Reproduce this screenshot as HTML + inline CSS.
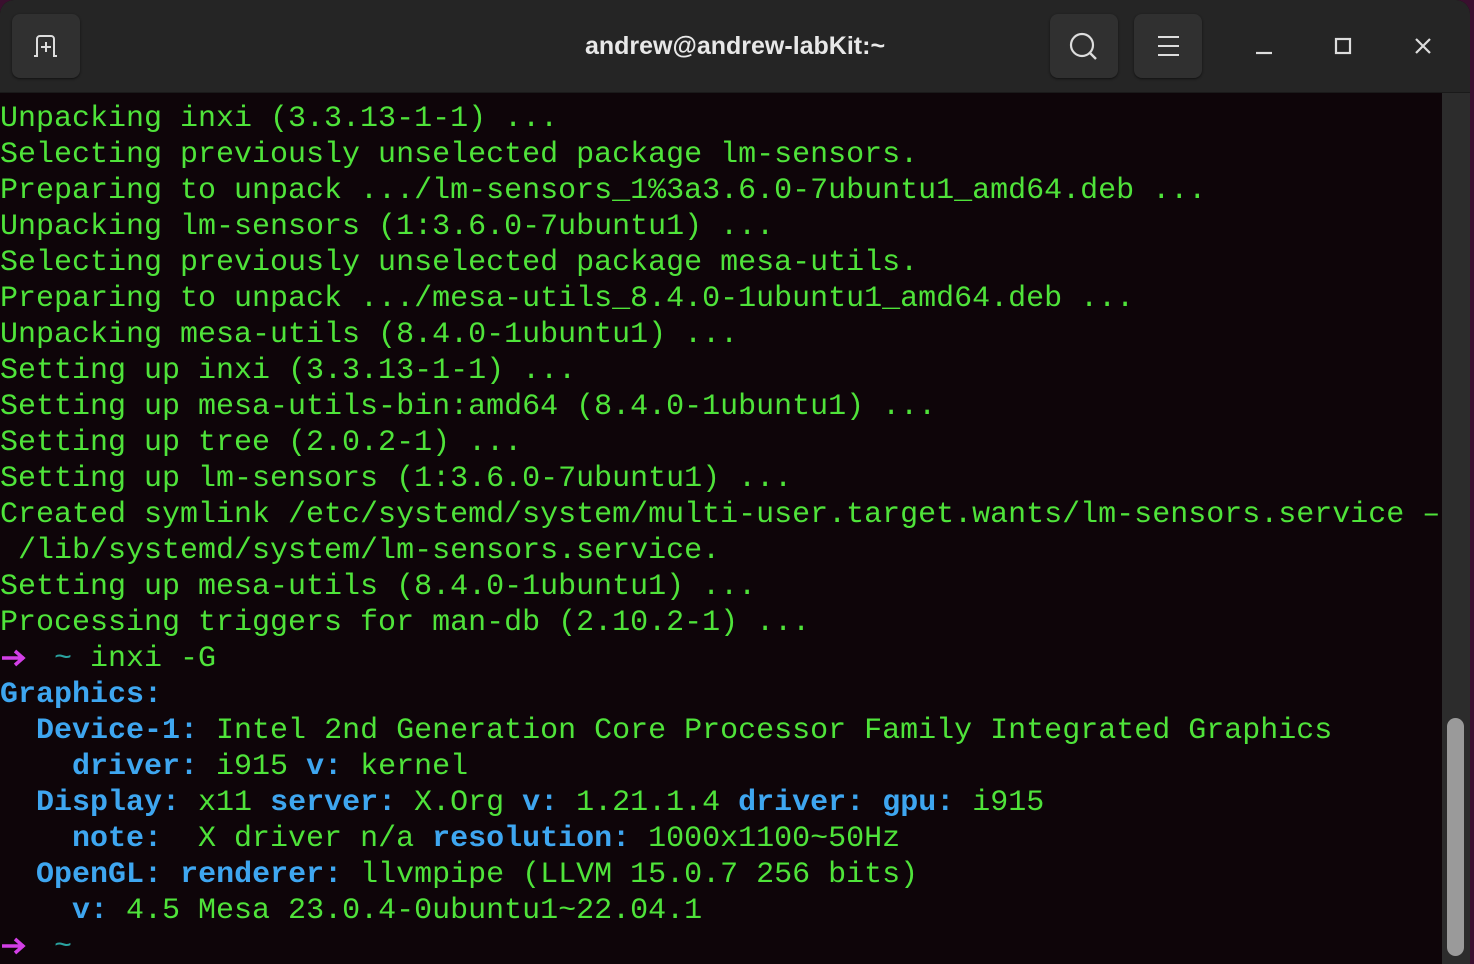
<!DOCTYPE html>
<html><head><meta charset="utf-8"><style>
html,body{margin:0;padding:0;width:1474px;height:964px;overflow:hidden;background:#3a0f2e}
#win{position:absolute;left:0;top:0;width:1470px;height:964px;background:#0e0509;border-radius:14px 14px 0 0;overflow:hidden}
#hdr{position:absolute;left:0;top:0;width:1470px;height:92px;background:#252525;border-bottom:1px solid #1a1a1a}
.btn{position:absolute;top:14px;width:68px;height:64px;background:#303030;border-radius:8px;box-shadow:0 1px 2px #111}
#title{position:absolute;left:0;width:1470px;top:32px;text-align:center;color:#e8e8e8;font:bold 25px "Liberation Sans",sans-serif}
#term{position:absolute;left:0;top:101px;font-family:"Liberation Mono",monospace;font-size:30px;line-height:36px;white-space:pre;color:#4fe33a}
.b{color:#3ea6f0;font-weight:bold}
.m{display:inline-block;width:18px;height:36px;vertical-align:top;position:relative}
.m svg{position:absolute;left:0;top:7px}
.t{color:#2aa3a0}
#sb{position:absolute;left:1442px;top:93px;width:28px;height:871px;background:#2c2c2c}
#th{position:absolute;left:1447px;top:718px;width:17px;height:238px;background:#9a9a9a;border-radius:9px}
</style></head><body>
<div id="win">
<div id="hdr">
 <div class="btn" style="left:12px"><svg width="68" height="64" viewBox="0 0 68 64"><path d="M22 42h3V25a3 3 0 0 1 3-3h11a3 3 0 0 1 3 3v17h3" fill="none" stroke="#ddd" stroke-width="2"/><path d="M34 28v10M29 33h10" stroke="#ddd" stroke-width="2"/></svg></div>
 <div id="title">andrew@andrew-labKit:~</div>
 <div class="btn" style="left:1050px"><svg width="68" height="64" viewBox="0 0 68 64"><circle cx="32" cy="31" r="11" fill="none" stroke="#ddd" stroke-width="2.2"/><path d="M40 39l6 6" stroke="#ddd" stroke-width="2.4"/></svg></div>
 <div class="btn" style="left:1134px"><svg width="68" height="64" viewBox="0 0 68 64"><path d="M24 23h21M24 32h21M24 41h21" stroke="#ddd" stroke-width="2"/></svg></div>
 <svg style="position:absolute;left:1240px;top:20px" width="220" height="54" viewBox="0 0 220 54"><path d="M16 33h16" stroke="#ddd" stroke-width="2.2"/><rect x="96" y="19" width="14" height="14" fill="none" stroke="#ddd" stroke-width="2.2"/><path d="M176 19l14 14M190 19l-14 14" stroke="#ddd" stroke-width="2.2"/></svg>
</div>
<div id="term">Unpacking inxi (3.3.13-1-1) ...
Selecting previously unselected package lm-sensors.
Preparing to unpack .../lm-sensors_1%3a3.6.0-7ubuntu1_amd64.deb ...
Unpacking lm-sensors (1:3.6.0-7ubuntu1) ...
Selecting previously unselected package mesa-utils.
Preparing to unpack .../mesa-utils_8.4.0-1ubuntu1_amd64.deb ...
Unpacking mesa-utils (8.4.0-1ubuntu1) ...
Setting up inxi (3.3.13-1-1) ...
Setting up mesa-utils-bin:amd64 (8.4.0-1ubuntu1) ...
Setting up tree (2.0.2-1) ...
Setting up lm-sensors (1:3.6.0-7ubuntu1) ...
Created symlink /etc/systemd/system/multi-user.target.wants/lm-sensors.service –
 /lib/systemd/system/lm-sensors.service.
Setting up mesa-utils (8.4.0-1ubuntu1) ...
Processing triggers for man-db (2.10.2-1) ...
<span class="m"><svg width="28" height="20" viewBox="0 0 28 20"><path d="M2 10h22M15 3l8 7-8 7" fill="none" stroke="#d23fe6" stroke-width="3.5"/></svg></span>  <span class="t">~</span> inxi -G
<span class="b">Graphics:</span>
  <span class="b">Device-1:</span> Intel 2nd Generation Core Processor Family Integrated Graphics
    <span class="b">driver:</span> i915 <span class="b">v:</span> kernel
  <span class="b">Display:</span> x11 <span class="b">server:</span> X.Org <span class="b">v:</span> 1.21.1.4 <span class="b">driver:</span> <span class="b">gpu:</span> i915
    <span class="b">note:</span>  X driver n/a <span class="b">resolution:</span> 1000x1100~50Hz
  <span class="b">OpenGL:</span> <span class="b">renderer:</span> llvmpipe (LLVM 15.0.7 256 bits)
    <span class="b">v:</span> 4.5 Mesa 23.0.4-0ubuntu1~22.04.1
<span class="m"><svg width="28" height="20" viewBox="0 0 28 20"><path d="M2 10h22M15 3l8 7-8 7" fill="none" stroke="#d23fe6" stroke-width="3.5"/></svg></span>  <span class="t">~</span></div>
<div id="sb"></div><div id="th"></div>
</div>
</body></html>
